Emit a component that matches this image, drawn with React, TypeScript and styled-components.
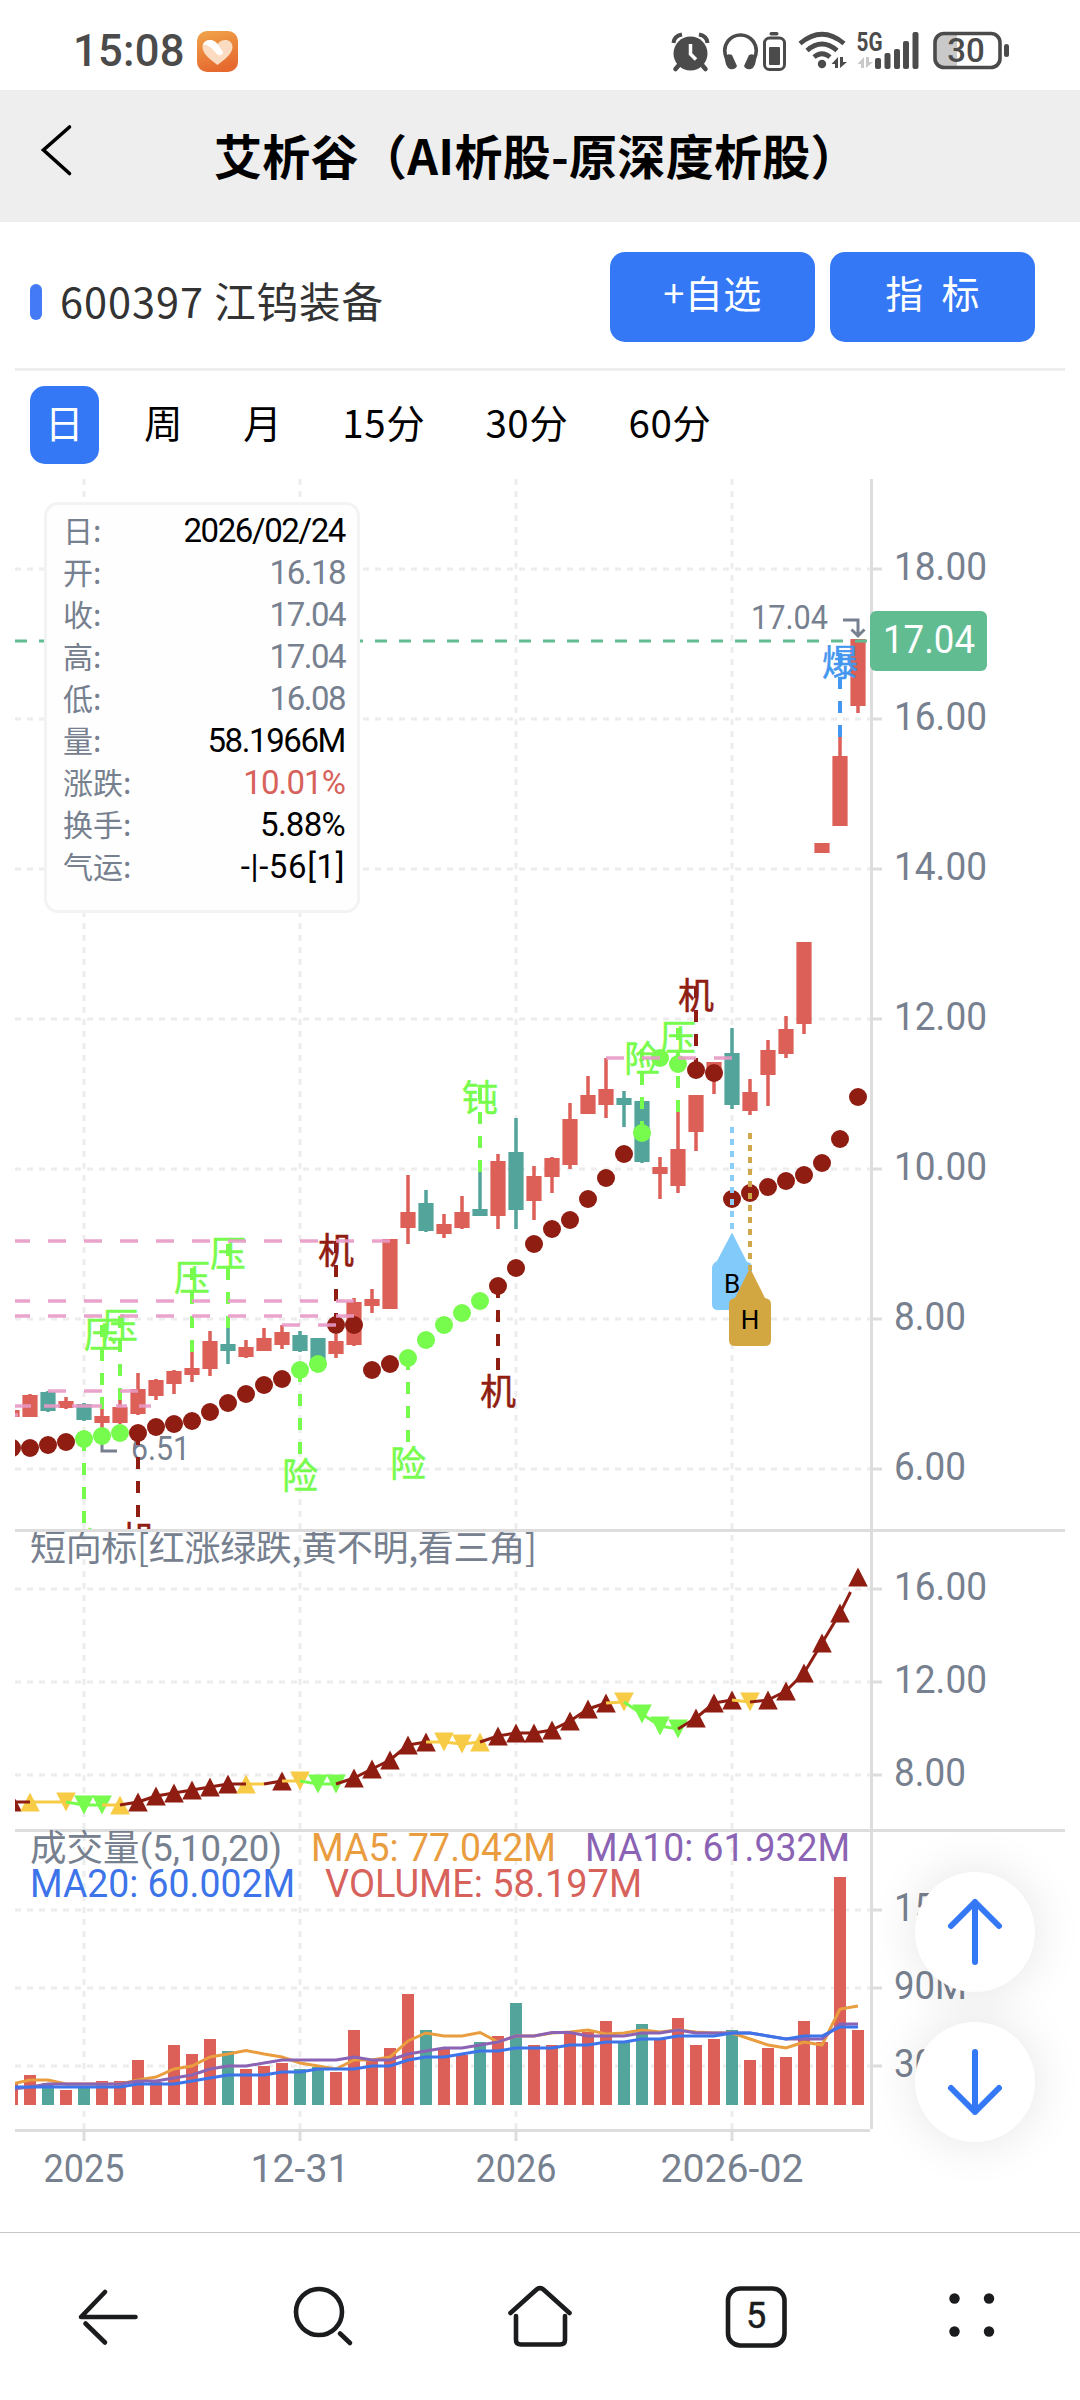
import React from "react";
import styled, { createGlobalStyle, css } from "styled-components";

const RED = "#dc5f58";
const TEAL = "#53a49a";
const MAROON = "#8f1d12";
const LIME = "#77fb4c";
const YELLOW = "#f7cb45";
const SLATE = "#76808f";
const BLUE = "#3478f6";
const PINK = "#e89ac6";
const FONT = 'Roboto, "Noto Sans CJK SC", sans-serif';
const CJK = '"Noto Sans CJK SC", sans-serif';

const GlobalStyle = createGlobalStyle`
  * { box-sizing: border-box; }
  body { margin: 0; background: #fff; font-family: ${FONT}; }
  svg { display: block; }
`;

const Screen = styled.main`
  width: 1080px;
  height: 2400px;
  display: flex;
  flex-direction: column;
  background: #fff;
  overflow: hidden;
`;

const StatusBar = styled.div`
  height: 90px;
  flex: none;
  display: flex;
  align-items: center;
  padding: 13px 70px 0 73px;
  color: #4b4b4b;
`;

const Clock = styled.span`
  width: 124px;
  font-size: 43.5px;
  font-weight: 500;
  line-height: 50px;
  letter-spacing: 0.3px;
  white-space: nowrap;
`;

const StatusIcons = styled.div`
  margin-left: auto;
  display: flex;
  align-items: center;
`;

const StatusGlyph = styled.svg<{ $gap?: number }>`
  height: 44px;
  margin: -2px 0 0 ${(p) => p.$gap ?? 0}px;
`;

const TitleBar = styled.header`
  height: 132px;
  flex: none;
  background: #eee;
  display: flex;
  align-items: center;
`;

const BackIcon = styled.svg`
  margin: 0 0 12px 36px;
  width: 40px;
  height: 56px;
`;

const Title = styled.h1`
  margin: 0 0 5px 138px;
  font-family: ${CJK};
  font-size: 48px;
  font-weight: 700;
  line-height: 60px;
  letter-spacing: 0.3px;
  color: #000;
  white-space: nowrap;
`;

const StockRow = styled.section`
  height: 149px;
  flex: none;
  margin: 0 15px;
  padding: 30px 30px 26px 15px;
  border-bottom: 3px solid #eee;
  display: flex;
  gap: 15px;
`;

const StockName = styled.div`
  flex: 1;
  height: 100px;
  display: flex;
  align-items: center;
  gap: 18px;
  color: #333;

  &::before {
    content: "";
    width: 12px;
    height: 36px;
    border-radius: 6px;
    background: #447af6;
  }
`;

const StockText = styled.span`
  margin-bottom: 5px;
  font-family: ${CJK};
  font-size: 41.5px;
  letter-spacing: 0.95px;
  white-space: nowrap;
`;

const ActionButton = styled.button`
  width: 205px;
  height: 90px;
  border: 0;
  padding: 0 0 11px;
  border-radius: 15px;
  background: ${BLUE};
  color: #fff;
  font-family: ${CJK};
  font-size: 38px;
  letter-spacing: 0.4px;
  white-space: pre;
`;

const Tabs = styled.nav`
  height: 93px;
  flex: none;
  padding: 15px 30px 0;
  display: flex;
  align-items: flex-start;
  gap: 30px;
`;

const Tab = styled.button<{ $active?: boolean }>`
  height: 78px;
  padding: 0 15px 7px;
  border: 0;
  border-radius: 15px;
  background: transparent;
  color: #000;
  font-family: ${CJK};
  font-size: 38.5px;
  line-height: 1;
  letter-spacing: 0.6px;
  white-space: nowrap;
  ${(p) =>
    p.$active &&
    css`
      background: ${BLUE};
      color: #fff;
    `}
`;

const ChartArea = styled.section`
  position: relative;
  height: 1768px;
  flex: none;
`;

const InfoPanel = styled.dl`
  position: absolute;
  left: 44px;
  top: 38px;
  width: 316px;
  height: 411px;
  margin: 0;
  padding: 4px 12px 0 16px;
  border: 3px solid #f2f3f5;
  border-radius: 14px;
  background: #fefefe;
`;

const InfoRow = styled.div`
  height: 42px;
  display: flex;
  align-items: center;
  justify-content: space-between;
`;

const InfoLabel = styled.dt`
  margin-top: -3px;
  font-family: ${CJK};
  font-size: 30px;
  line-height: 42px;
  color: ${SLATE};
`;

const InfoValue = styled.dd<{ $color: string; $spacing: number }>`
  margin: 1px 0 0;
  font-size: 33px;
  line-height: 42px;
  letter-spacing: ${(p) => p.$spacing}px;
  color: ${(p) => p.$color};
`;

const FloatButton = styled.button<{ $top: number }>`
  position: absolute;
  left: 915px;
  top: ${(p) => p.$top}px;
  width: 120px;
  height: 120px;
  padding: 0;
  border: 0;
  border-radius: 50%;
  background: #fff;
  box-shadow: 0 0 50px rgba(0, 10, 5, 0.11);
  display: grid;
  place-items: center;
`;

const BottomNav = styled.nav`
  height: 168px;
  flex: none;
  border-top: 1px solid #c8c8c8;
  display: grid;
  grid-template-columns: repeat(5, 1fr);
  place-items: center;
  background: #fff;
`;

const NavIcon = styled.svg`
  width: 80px;
  height: 80px;
  fill: none;
  stroke: #1b1c1d;
  stroke-width: 4.6;
  stroke-linecap: round;
  stroke-linejoin: round;
`;

const xAt = (i: number) => 12 + 18 * i;

// [high, low, body top, body bottom, rising]
const candles: [number, number, number, number, number][] = [
  [1410, 1417, 1410, 1417, 1], [1394, 1417, 1395, 1417, 1], [1391, 1412, 1392, 1411, 0],
  [1397, 1409, 1401, 1408, 1], [1403, 1421, 1404, 1420, 0], [1408, 1428, 1416, 1423, 1],
  [1400, 1424, 1407, 1423, 1], [1373, 1415, 1389, 1414, 1], [1379, 1400, 1380, 1396, 1],
  [1370, 1394, 1371, 1384, 1], [1352, 1382, 1368, 1375, 1], [1331, 1376, 1341, 1369, 1],
  [1328, 1364, 1344, 1351, 0], [1340, 1358, 1347, 1357, 1], [1328, 1351, 1338, 1351, 1],
  [1325, 1349, 1332, 1345, 1], [1331, 1352, 1335, 1351, 0], [1338, 1362, 1338, 1362, 0],
  [1334, 1358, 1341, 1354, 1], [1298, 1346, 1302, 1345, 1], [1289, 1313, 1299, 1306, 1],
  [1239, 1309, 1239, 1309, 1], [1175, 1244, 1212, 1228, 1], [1190, 1232, 1203, 1231, 0],
  [1214, 1238, 1224, 1234, 1], [1196, 1229, 1212, 1228, 1], [1172, 1216, 1209, 1216, 0],
  [1154, 1229, 1161, 1216, 1], [1118, 1229, 1152, 1210, 0], [1166, 1220, 1176, 1201, 1],
  [1157, 1193, 1158, 1177, 1], [1103, 1169, 1119, 1165, 1], [1076, 1114, 1095, 1114, 1],
  [1058, 1118, 1089, 1105, 1], [1091, 1127, 1098, 1105, 0], [1101, 1163, 1101, 1162, 0],
  [1157, 1199, 1167, 1174, 1], [1112, 1193, 1149, 1186, 1], [1095, 1151, 1095, 1132, 1],
  [1062, 1094, 1062, 1078, 1], [1028, 1109, 1053, 1105, 0], [1079, 1115, 1092, 1111, 1],
  [1040, 1106, 1050, 1075, 1], [1016, 1058, 1029, 1054, 1], [942, 1034, 942, 1024, 1],
  [843, 853, 843, 853, 1], [737, 826, 756, 826, 1], [639, 713, 639, 706, 1],
];

const dots = [
  1448, 1448, 1445, 1442, 1439, 1436, 1433, 1433, 1427, 1424, 1421, 1412, 1403, 1394, 1385, 1379,
  1370, 1364, 1325, 1325, 1370, 1364, 1358, 1340, 1325, 1313, 1301, 1286, 1268, 1244, 1229, 1220,
  1199, 1178, 1154, 1133, 1058, 1064, 1070, 1073, 1199, 1193, 1187, 1181, 1175, 1163, 1139, 1097,
];
const limeDots = new Set([4, 5, 6, 16, 17, 22, 23, 24, 25, 26, 35, 36, 37]);

// [x, line start, line end, text baseline, text, colour]
const signals: [number, number, number, number, string, string][] = [
  [102, 1409, 1325, 1348, "压", LIME], [120, 1400, 1316, 1339, "压", LIME],
  [192, 1352, 1268, 1291, "压", LIME], [228, 1328, 1244, 1267, "压", LIME],
  [336, 1325, 1241, 1264, "机", MAROON], [480, 1172, 1088, 1111, "钝", LIME],
  [642, 1133, 1049, 1072, "险", LIME], [678, 1112, 1028, 1051, "压", LIME],
  [696, 1070, 986, 1009, "机", MAROON], [840, 737, 653, 676, "爆", "#4497f0"],
  [300, 1370, 1454, 1489, "险", LIME], [498, 1286, 1370, 1405, "机", MAROON],
  [408, 1358, 1442, 1477, "险", LIME], [138, 1433, 1517, 1553, "机", MAROON],
  [84, 1439, 1523, 1559, "险", LIME],
];

// [x start, x end, y]
const resistance: [number, number, number][] = [
  [12, 390, 1241], [12, 354, 1301], [12, 354, 1316], [282, 336, 1325], [48, 138, 1391], [606, 732, 1058],
];
const resistanceParts: [number, number, number][] = [
  [15, 31, 1406], [44, 60, 1406], [72, 102, 1406], [116, 127, 1406], [139, 151, 1406], [15, 18, 1415],
];

// [y, kind]: r/y/g colour, u/d/- direction
const trend: [number, string][] = [
  [1802, "ru"], [1802, "yu"], [1802, "y-"], [1802, "yd"], [1805, "gd"], [1805, "gd"], [1805, "yu"],
  [1802, "ru"], [1796, "ru"], [1793, "ru"], [1790, "ru"], [1787, "ru"], [1784, "ru"], [1784, "yu"],
  [1784, "y-"], [1781, "ru"], [1781, "yd"], [1784, "gd"], [1784, "gd"], [1778, "ru"], [1769, "ru"],
  [1760, "ru"], [1745, "ru"], [1742, "ru"], [1742, "yd"], [1744, "yd"], [1742, "yu"], [1736, "ru"],
  [1733, "ru"], [1733, "ru"], [1730, "ru"], [1721, "ru"], [1709, "ru"], [1703, "ru"], [1702, "yd"],
  [1714, "gd"], [1726, "gd"], [1729, "gd"], [1718, "ru"], [1703, "ru"], [1700, "ru"], [1702, "yd"],
  [1700, "ru"], [1691, "ru"], [1673, "ru"], [1643, "ru"], [1613, "ru"], [1577, "ru"],
];
const trendColor: Record<string, string> = { r: MAROON, y: YELLOW, g: LIME };

const volumes = [
  2083, 2075, 2083, 2090, 2087, 2081, 2081, 2060, 2082, 2045, 2054, 2039, 2051, 2069, 2066, 2063,
  2069, 2067, 2072, 2030, 2060, 2048, 1994, 2030, 2048, 2055, 2042, 2036, 2003, 2045, 2045, 2034,
  2032, 2021, 2042, 2024, 2039, 2018, 2045, 2039, 2030, 2060, 2048, 2057, 2021, 2042, 1877, 2030,
];
const ma5 = [
  2084, 2080, 2080, 2084, 2084, 2084, 2084, 2080, 2077, 2069, 2066, 2057, 2054, 2050.5, 2054, 2057,
  2063, 2066, 2069, 2060, 2060, 2057, 2041, 2033, 2036, 2036, 2032.5, 2042, 2036, 2036, 2033, 2032,
  2030, 2034, 2033, 2030, 2032, 2030, 2032, 2033, 2033, 2039, 2045, 2048, 2042, 2045, 2009, 2006,
];
const ma10 = [
  2089, 2087, 2084, 2084, 2084, 2084, 2084, 2081, 2081, 2078, 2075, 2069, 2066, 2066, 2063, 2060,
  2060, 2060, 2060, 2057, 2060, 2060, 2054, 2051, 2048, 2048, 2045, 2042, 2036, 2036, 2032.5, 2032.5,
  2036, 2036, 2036, 2033, 2033, 2030, 2033, 2033, 2033, 2033, 2036, 2039, 2039, 2039, 2024, 2024,
];
const ma20 = [
  2087, 2087, 2087, 2087, 2087, 2087, 2087, 2084, 2084, 2084, 2081, 2078, 2075, 2075, 2075, 2072,
  2072, 2069, 2069, 2069, 2066, 2066, 2060, 2057, 2057, 2054, 2051, 2051, 2048, 2048, 2048, 2045,
  2045, 2042, 2042, 2039, 2039, 2036, 2036, 2036, 2033, 2033, 2036, 2039, 2036, 2036, 2027, 2027,
];
const toPoints = (ys: number[]) => ys.map((y, i) => `${xAt(i)},${y}`).join(" ");

const yAxis: [number, string, number][] = [
  [569, "18.00", 93], [719, "16.00", 93], [869, "14.00", 93], [1019, "12.00", 93], [1169, "10.00", 93],
  [1319, "8.00", 72], [1469, "6.00", 72], [1589, "16.00", 93], [1682, "12.00", 93], [1775, "8.00", 72],
  [1910, "150M", 93], [1988, "90M", 73], [2066, "30M", 73],
];
const xAxis: [number, string, number][] = [
  [84, "2025", 81], [300, "12-31", 99], [516, "2026", 81], [732, "2026-02", 143],
];

interface LabelProps {
  x: number;
  y: number;
  len?: number;
  size?: number;
  color?: string;
  anchor?: "start" | "middle";
  children: string;
}

function Label({ x, y, len, size = 38.5, color = SLATE, anchor = "start", children }: LabelProps) {
  return (
    <text x={x} y={y} fontSize={size} fill={color} textAnchor={anchor} textLength={len}
      lengthAdjust="spacingAndGlyphs" fontFamily={FONT}>
      {children}
    </text>
  );
}

function Grid() {
  return (
    <g>
      <g stroke="#ededed" strokeWidth={3} strokeDasharray="6 6">
        {yAxis.map(([y]) => <line key={y} x1={15} x2={870} y1={y} y2={y} />)}
        {xAxis.map(([x]) => <line key={x} x1={x} x2={x} y1={479} y2={2129} />)}
      </g>
      <g stroke="#ddd" strokeWidth={3}>
        <line x1={871.5} x2={871.5} y1={479} y2={2129} />
        <line x1={15} x2={1065} y1={1530.5} y2={1530.5} />
        <line x1={15} x2={1065} y1={1830.5} y2={1830.5} />
        <line x1={15} x2={870} y1={2130.5} y2={2130.5} />
        {yAxis.map(([y]) => <line key={y} x1={873} x2={882} y1={y} y2={y} />)}
        {xAxis.map(([x]) => <line key={x} x1={x} x2={x} y1={2132} y2={2141} />)}
      </g>
      {yAxis.map(([y, t, w]) => <Label key={y} x={894} y={y + 11} len={w}>{t}</Label>)}
      {xAxis.map(([x, t, w]) => <Label key={x} x={x} y={2182} len={w} anchor="middle">{t}</Label>)}
    </g>
  );
}

function PricePane() {
  return (
    <g clipPath="url(#pricePane)">
      {candles.map(([h, l, t, b, up], i) => (
        <g key={i} fill={up ? RED : TEAL}>
          <rect x={xAt(i) - 1.75} y={h} width={3.5} height={l - h} />
          <rect x={xAt(i) - 7.6} y={t} width={15.2} height={b - t} />
        </g>
      ))}
      <polyline points="102,1428 102,1451 117,1451" fill="none" stroke={SLATE} strokeWidth={3} />
      <Label x={131} y={1460} len={59} size={32.5}>6.51</Label>
      {signals.map(([x, y1, y2, ty, t, c]) => (
        <g key={x}>
          <line x1={x} x2={x} y1={y1} y2={y2} stroke={c} strokeWidth={4} strokeDasharray="12 12" />
          <text x={x} y={ty} fontSize={36} textAnchor="middle" fill={c} stroke={c} strokeWidth={0.5} fontFamily={CJK}>{t}</text>
        </g>
      ))}
      {dots.map((y, i) => (
        <circle key={i} cx={xAt(i)} cy={y} r={9} fill={limeDots.has(i) ? LIME : MAROON} />
      ))}
      <g stroke={PINK} strokeWidth={3.5} strokeOpacity={0.9}>
        {resistance.map(([x1, x2, y], i) => (
          <line key={i} x1={x1} x2={x2} y1={y} y2={y} strokeDasharray="18 18" />
        ))}
        {resistanceParts.map(([x1, x2, y], i) => <line key={i} x1={x1} x2={x2} y1={y} y2={y} />)}
      </g>
      <line x1={732} x2={732} y1={1127} y2={1234} stroke="#8ccdf5" strokeWidth={4} strokeDasharray="6 6" />
      <path d="M732 1232.5 L747 1262 Q752 1262 752 1268 V1304 Q752 1310 746 1310 H718 Q712 1310 712 1304 V1268 Q712 1264 717 1261 Z" fill="#82cafa" />
      <Label x={732} y={1293} size={26} color="#000" anchor="middle">B</Label>
      <line x1={750} x2={750} y1={1133} y2={1270} stroke="#cfa84c" strokeWidth={4} strokeDasharray="6 6" />
      <path d="M750 1268 L765 1298 Q771 1299 771 1304 V1340 Q771 1346 765 1346 H735 Q729 1346 729 1340 V1304 Q729 1299 735 1298 Z" fill="#d2a741" />
      <Label x={750} y={1329} size={26} color="#000" anchor="middle">H</Label>
      <line x1={15} x2={867} y1={641} y2={641} stroke="#62bc92" strokeWidth={3} strokeDasharray="12 12" />
      <Label x={751} y={629} len={77} size={32.5}>17.04</Label>
      <path d="M843 620 H858 V636 M851.5 629.5 L858 636 L864.5 629.5" fill="none" stroke={SLATE} strokeWidth={3} />
    </g>
  );
}

function TrendPane() {
  return (
    <g clipPath="url(#plot)">
      <text x={30} y={1561} fontSize={36} fill={SLATE} fontFamily={CJK} textLength={507}>
        短向标[红涨绿跌,黄不明,看三角]
      </text>
      {trend.map(([y, k], i) => {
        if (k[1] === "-") return null;
        const x = xAt(i);
        const s = k[1] === "u" ? 1 : -1;
        return (
          <polygon key={i} fill={trendColor[k[0]]}
            points={`${x},${y - 9.5 * s} ${x - 9.8},${y + 9.5 * s} ${x + 9.8},${y + 9.5 * s}`} />
        );
      })}
      {trend.slice(1).map(([y, k], i) => {
        const last = i === trend.length - 2;
        const color = i === 0 || i === 12 ? MAROON : trendColor[k[0]];
        return (
          <line key={i} x1={xAt(i)} y1={trend[i][0]} x2={last ? 850.5 : xAt(i + 1)} y2={last ? 1592 : y}
            stroke={color} strokeWidth={3} />
        );
      })}
    </g>
  );
}

function VolumePane() {
  return (
    <g>
      <text x={30} y={1861} fontSize={36.5} fill={SLATE} fontFamily={FONT} textLength={252} lengthAdjust="spacingAndGlyphs">
        成交量(5,10,20)
      </text>
      <Label x={311} y={1861} len={245} color="#e99d3f">MA5: 77.042M</Label>
      <Label x={585} y={1861} len={265} color="#8b63b4">MA10: 61.932M</Label>
      <Label x={30} y={1897} len={265} color="#3d74ea">MA20: 60.002M</Label>
      <Label x={325} y={1897} len={317} color="#d7615b">VOLUME: 58.197M</Label>
      <g clipPath="url(#plot)">
        {volumes.map((y, i) => (
          <rect key={i} x={xAt(i) - 6} y={y} width={12} height={2105 - y} fill={candles[i][4] ? RED : TEAL} />
        ))}
        <g fill="none" strokeWidth={3}>
          <polyline points={toPoints(ma5)} stroke="#e99d3f" />
          <polyline points={toPoints(ma10)} stroke="#8b63b4" />
          <polyline points={toPoints(ma20)} stroke="#3d74ea" />
        </g>
      </g>
    </g>
  );
}

function Chart() {
  return (
    <svg width={1080} height={1768} viewBox="0 464 1080 1768">
      <defs>
        <clipPath id="pricePane"><rect x={15} y={479} width={855} height={1050} /></clipPath>
        <clipPath id="plot"><rect x={15} y={1532} width={855} height={600} /></clipPath>
      </defs>
      <Grid />
      <PricePane />
      <rect x={870} y={611} width={117} height={60} rx={6} fill="#62bc92" />
      <Label x={883} y={652.5} len={92} color="#fff">17.04</Label>
      <TrendPane />
      <VolumePane />
    </svg>
  );
}

// [label, value, colour, letter spacing]
const info: [string, string, string, number][] = [
  ["日:", "2026/02/24", "#000", -1.4], ["开:", "16.18", SLATE, -1.5], ["收:", "17.04", SLATE, -1.5],
  ["高:", "17.04", SLATE, -1.5], ["低:", "16.08", SLATE, -1.5], ["量:", "58.1966M", "#000", -1.4],
  ["涨跌:", "10.01%", "#d7615b", -0.9], ["换手:", "5.88%", "#000", -0.7], ["气运:", "-|-56[1]", "#000", 0.6],
];

function Arrow({ down }: { down?: boolean }) {
  return (
    <svg width={60} height={70} viewBox="0 0 60 70" fill="none" stroke={BLUE} strokeWidth={6}
      strokeLinecap="round" strokeLinejoin="round">
      <path d={down ? "M30 5 V65 M6 41 L30 65 L54 41" : "M30 65 V5 M6 29 L30 5 L54 29"} />
    </svg>
  );
}

function Status() {
  const c = "#4b4b4b";
  return (
    <StatusBar>
      <Clock>15:08</Clock>
      <svg width={41} height={41} viewBox="0 0 41 41">
        <defs>
          <linearGradient id="badge" x1="0" y1="0" x2="0.3" y2="1">
            <stop offset="0" stopColor="#f0a54a" /><stop offset="1" stopColor="#e66a2f" />
          </linearGradient>
        </defs>
        <rect width={41} height={41} rx={10} fill="url(#badge)" />
        <path d="M20.500 34 C14 29 5.500 23 5.500 16 C5.500 8 16 6.500 20.500 13 C25 6.500 35.500 8 35.500 16 C35.500 23 27 29 20.500 34Z" fill="#fbdcc2" />
        <path d="M6 14 C8 8 16 7 20.500 13 L26 21 C26 25 21 25 19 22 C15 17 10 13 6 14Z" fill="#fff" />
      </svg>
      <StatusIcons>
        <StatusGlyph width={39} viewBox="671 29 39 44">
          <circle cx={690.5} cy={53.500} r={17} fill={c} />
          <path d="M673.500 43 Q674 36 682 34.500 M707.500 43 Q707 36 699 34.500" fill="none" stroke={c} strokeWidth={4} />
          <path d="M679 65 L675.500 69 M702 65 L705.500 69" stroke={c} strokeWidth={4.500} strokeLinecap="round" />
          <path d="M690.500 44 V54 L696 59.500" fill="none" stroke="#fff" strokeWidth={3.500} />
        </StatusGlyph>
        <StatusGlyph $gap={12} width={38} viewBox="722 29 38 44">
          <path d="M727 60 Q722 49 728 41 Q733 35 740.500 35 Q748 35 753 41 Q759 49 754 60" fill="none" stroke={c} strokeWidth={3.600} />
          <path d="M725 57 Q727 53 732 55 L737 66 Q735 70 730 69 Q725 67 725 57Z M756 57 Q754 53 749 55 L744 66 Q746 70 751 69 Q756 67 756 57Z" fill={c} />
        </StatusGlyph>
        <StatusGlyph $gap={2} width={26} viewBox="762 29 26 44">
          <rect x={769.500} y={32} width={9} height={3.500} rx={1.700} fill={c} />
          <rect x={764.500} y={38} width={20} height={31.500} rx={5} fill="none" stroke={c} strokeWidth={3} />
          <rect x={769} y={47} width={11} height={18} rx={1} fill={c} />
        </StatusGlyph>
        <StatusGlyph $gap={10} width={52} viewBox="798 29 52 44">
          <g fill="none" stroke={c} strokeWidth={4.800}>
            <path d="M800 43.500 Q822 25 844 43.500" />
            <path d="M807 50.500 Q822 37.500 837 50.500" />
            <path d="M814 57 Q822 50.500 830 57" />
          </g>
          <circle cx={822} cy={64} r={4.200} fill={c} />
          <path d="M838 57 V68 H835 V64 H831.500Z M840 57 V68 L847 62 H843 V57Z" fill={c} />
        </StatusGlyph>
        <StatusGlyph $gap={6} width={64} viewBox="856 29 64 44">
          <text x={856.500} y={50.500} fontFamily={FONT} fontSize={25} fontWeight={700} textLength={26} lengthAdjust="spacingAndGlyphs" fill={c}>5G</text>
          <path d="M864 57 V68 H861 V64 H857.500Z M866 57 V68 L873 62 H869 V57Z" fill="#c9c9c9" />
          {[[878, 58], [887.5, 53], [897, 49], [906, 41], [915.5, 32]].map(([x, y]) => (
            <rect key={x} x={x - 3} y={y} width={6} height={69 - y} rx={2} fill={c} />
          ))}
        </StatusGlyph>
        <StatusGlyph $gap={12} width={78} viewBox="932 29 78 44">
          <path d="M957 34 H947 Q935 34 935 44 V57 Q935 67 947 67 H957Z" fill="#c9c9c9" />
          <rect x={935} y={33.500} width={65} height={34} rx={9} fill="none" stroke={c} strokeWidth={3.600} />
          <rect x={1004} y={44} width={5} height={13} rx={2.500} fill={c} />
          <text x={966} y={62} fontFamily={FONT} fontSize={33} fontWeight={500} textAnchor="middle" fill={c}>30</text>
        </StatusGlyph>
      </StatusIcons>
    </StatusBar>
  );
}

function Nav() {
  return (
    <BottomNav>
      <NavIcon viewBox="68 2277 80 80"><path d="M135.500 2317 H81 L105 2292 M85.500 2323.500 L105 2342.500" /></NavIcon>
      <NavIcon viewBox="284 2277 80 80">
        <circle cx={319} cy={2312} r={23} /><path d="M340 2333.500 L350 2343" />
      </NavIcon>
      <NavIcon viewBox="500 2277 80 80">
        <path d="M510.500 2313 L536 2290 Q540 2286 544 2290 L569.500 2313 M516 2316 V2340 Q516 2344.500 521 2344.500 H560 Q565 2344.500 565 2340 V2316" />
      </NavIcon>
      <NavIcon viewBox="716 2277 80 80">
        <rect x={728} y={2288.500} width={56.500} height={57} rx={12} />
        <text x={756} y={2328} textAnchor="middle" fontFamily={FONT} fontSize={36} fontWeight={400} fill="#1b1c1d" stroke="#1b1c1d" strokeWidth={0.5}>5</text>
      </NavIcon>
      <NavIcon viewBox="932 2277 80 80">
        <g fill="#1b1c1d" stroke="none">
          {[954.5, 989].map((x) => [2298.5, 2331.5].map((y) => <circle key={`${x}-${y}`} cx={x} cy={y} r={5.2} />))}
        </g>
      </NavIcon>
    </BottomNav>
  );
}

export default function App() {
  return (
    <Screen>
      <GlobalStyle />
      <Status />
      <TitleBar>
        <BackIcon viewBox="36 122 40 56"><path d="M69.500 127 L43.500 150 L69.500 173.500" fill="none" stroke="#000" strokeWidth={3.6} strokeLinecap="round" /></BackIcon>
        <Title>艾析谷（AI析股-原深度析股）</Title>
      </TitleBar>
      <StockRow>
        <StockName><StockText>600397 江钨装备</StockText></StockName>
        <ActionButton>+自选</ActionButton>
        <ActionButton>{"指  标"}</ActionButton>
      </StockRow>
      <Tabs>
        {["日", "周", "月", "15分", "30分", "60分"].map((t, i) => (
          <Tab key={t} $active={i === 0}>{t}</Tab>
        ))}
      </Tabs>
      <ChartArea>
        <Chart />
        <InfoPanel>
          {info.map(([k, v, c, s]) => (
            <InfoRow key={k}>
              <InfoLabel>{k}</InfoLabel>
              <InfoValue $color={c} $spacing={s}>{v}</InfoValue>
            </InfoRow>
          ))}
        </InfoPanel>
        <FloatButton $top={1408} aria-label="上"><Arrow /></FloatButton>
        <FloatButton $top={1558} aria-label="下"><Arrow down /></FloatButton>
      </ChartArea>
      <Nav />
    </Screen>
  );
}
